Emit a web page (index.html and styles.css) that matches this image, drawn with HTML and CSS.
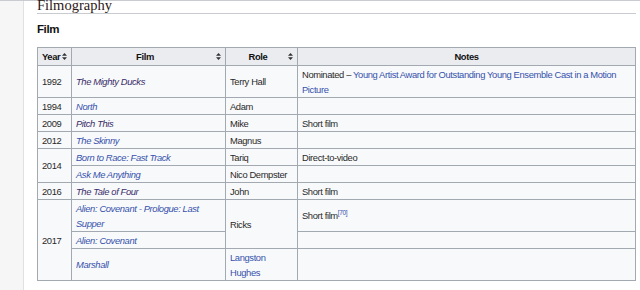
FILE: index.html
```html
<!DOCTYPE html>
<html lang="en">
<head>
  <meta charset="UTF-8" />
  <meta name="viewport" content="width=device-width, initial-scale=1.0"/>
  <title>Filmography</title>
  <link rel="stylesheet" href="styles.css">
</head>
<body>
  <div id="page">
    <div id="sidebar"></div>
    <div id="content">
      <h2>Filmography</h2>
      <h3>Film</h3>
      <table class="wikitable">
        <colgroup>
          <col class="col-year">
          <col class="col-film">
          <col class="col-role">
          <col class="col-notes">
        </colgroup>
        <thead>
          <tr>
            <th><div class="sort"><span>Year</span><svg width="5" height="7" viewBox="0 0 5 7"><path d="M2.5 0 L5 2.8 H0 Z M2.5 7 L5 4.2 H0 Z" fill="#333"/></svg></div></th>
            <th><div class="sort"><span>Film</span><svg width="5" height="7" viewBox="0 0 5 7"><path d="M2.5 0 L5 2.8 H0 Z M2.5 7 L5 4.2 H0 Z" fill="#333"/></svg></div></th>
            <th><div class="sort"><span>Role</span><svg width="5" height="7" viewBox="0 0 5 7"><path d="M2.5 0 L5 2.8 H0 Z M2.5 7 L5 4.2 H0 Z" fill="#333"/></svg></div></th>
            <th>Notes</th>
          </tr>
        </thead>
        <tbody>
          <tr>
            <td>1992</td>
            <td><a class="visited"><i>The Mighty Ducks</i></a></td>
            <td>Terry Hall</td>
            <td>Nominated – <a>Young Artist Award for Outstanding Young Ensemble Cast in a Motion Picture</a></td>
          </tr>
          <tr>
            <td>1994</td>
            <td><a><i>North</i></a></td>
            <td>Adam</td>
            <td></td>
          </tr>
          <tr>
            <td>2009</td>
            <td><a class="visited"><i>Pitch This</i></a></td>
            <td>Mike</td>
            <td>Short film</td>
          </tr>
          <tr>
            <td>2012</td>
            <td><a><i>The Skinny</i></a></td>
            <td>Magnus</td>
            <td></td>
          </tr>
          <tr>
            <td rowspan="2">2014</td>
            <td><a><i>Born to Race: Fast Track</i></a></td>
            <td>Tariq</td>
            <td>Direct-to-video</td>
          </tr>
          <tr>
            <td><a><i>Ask Me Anything</i></a></td>
            <td>Nico Dempster</td>
            <td></td>
          </tr>
          <tr>
            <td>2016</td>
            <td><a class="visited"><i>The Tale of Four</i></a></td>
            <td>John</td>
            <td>Short film</td>
          </tr>
          <tr>
            <td rowspan="3">2017</td>
            <td><a><i>Alien: Covenant - Prologue: Last Supper</i></a></td>
            <td rowspan="2">Ricks</td>
            <td>Short film<sup><a>[70]</a></sup></td>
          </tr>
          <tr>
            <td><a><i>Alien: Covenant</i></a></td>
            <td></td>
          </tr>
          <tr>
            <td><a><i>Marshall</i></a></td>
            <td><a>Langston Hughes</a></td>
            <td></td>
          </tr>
        </tbody>
      </table>
    </div>
  </div>
</body>
</html>
```

FILE: styles.css
```css
/* Reset */
* {
  margin: 0;
  padding: 0;
  box-sizing: border-box;
}
body {
  font-family: "Liberation Sans", Arial, sans-serif;
  color: #2a2a2a;
  background: #fff;
  height: 100vh;
  overflow: hidden;
}
#page {
  display: flex;
  height: 100%;
  border-top: 1px solid #c8ccd1;
}
/* Left gray column */
#sidebar {
  width: 24px;
  background: #f6f6f6;
  border-right: 1px solid #dfe1e4;
}
#content {
  flex: 1;
  padding: 0 4px 0 13px;
}
/* Section heading */
h2 {
  font-family: "Liberation Serif", "Times New Roman", serif;
  font-weight: normal;
  font-size: 14.5px;
  line-height: 9px;
  color: #2e1717;
  padding-bottom: 3px;
  border-bottom: 1px solid #c8ccd1;
}
h3 {
  font-size: 11.5px;
  letter-spacing: -0.4px;
  line-height: 15px;
  font-weight: bold;
  color: #111;
  margin: 8px 0 10px;
}
/* Table */
.wikitable {
  width: 598px;
  table-layout: fixed;
  border-collapse: collapse;
  background: #f8f9fa;
  border: 1px solid #a2a9b1;
  font-size: 9.4px;
  letter-spacing: -0.38px;
}
.col-year { width: 34px; }
.col-film { width: 154px; }
.col-role { width: 72px; }
.col-notes { width: 338px; }
.wikitable th,
.wikitable td {
  border: 1px solid #a2a9b1;
  padding: 0.5px 4px;
  line-height: 15px;
  vertical-align: middle;
  text-align: left;
}
.wikitable th {
  background: #eaecf0;
  font-size: 9.4px;
  font-weight: bold;
  color: #111;
  text-align: center;
  padding: 1.5px 4px;
  line-height: 14px;
}
/* Header with sort arrows */
.sort {
  display: flex;
  align-items: center;
  gap: 2px;
}
.sort span {
  flex: 1;
  text-align: center;
}
.sort svg {
  flex: none;
}
a {
  color: #3652ad;
}
a.visited {
  color: #3a2d6b;
}
sup {
  font-size: 6.5px;
  line-height: 0;
  vertical-align: 4px;
}
```
